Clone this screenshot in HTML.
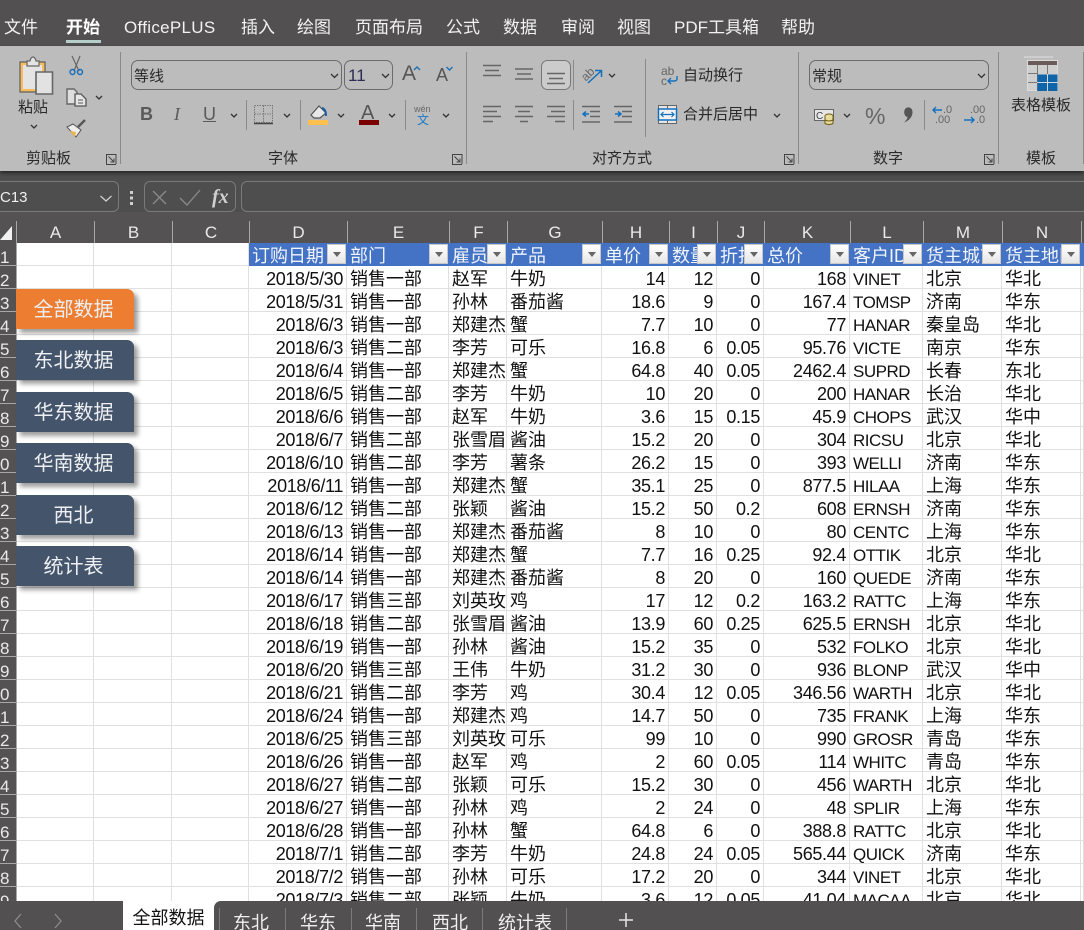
<!DOCTYPE html>
<html lang="zh-CN"><head><meta charset="utf-8"><title>Excel</title>
<style>
html,body{margin:0;padding:0;width:1084px;height:930px;overflow:hidden;background:#fff}
body{position:relative;font-family:"Liberation Sans","Noto Sans CJK SC",sans-serif;color:#111}
.a{position:absolute;white-space:nowrap}
#title{left:0;top:0;width:1084px;height:46px;background:#525051}
.m{top:16px;font-size:17px;line-height:24px;color:#f2f2f2}
#ribbon{left:0;top:46px;width:1084px;height:125px;background:#bcbcbc;box-shadow:0 2px 4px rgba(0,0,0,.55)}
#fbar{left:0;top:171px;width:1084px;height:50px;background:#4e4e4e}
#hdr{left:0;top:212px;width:1084px;height:31px;background:#545253}
.t{font-size:15px;line-height:20px;color:#2a2a2a}
.box{border:1px solid #6c6c6c;border-radius:7px;box-sizing:border-box}
.fb{border:1px solid #7a7a7a;border-radius:6px;box-sizing:border-box}
.ch{top:221px;height:22px;border-left:1px solid #a8a8a8;box-sizing:border-box;text-align:center;color:#eaeaea;font-size:17px;line-height:24px}
#rows{left:0;top:243px;width:16px;height:660px;background:#545253;overflow:hidden;border-right:1px solid #a8a8a8;box-sizing:content-box}
#rows div{height:22px;border-bottom:1px solid #a8a8a8;font-size:17px;line-height:30px;color:#eaeaea;text-align:right;padding-right:9px;white-space:nowrap;overflow:hidden}
#sheet{left:17px;top:243px;border-collapse:separate;border-spacing:0;table-layout:fixed;width:1067px}
#sheet td{box-sizing:border-box;height:23px;padding:5px 3px 0;line-height:17px;font-size:18px;border-right:1px solid #e0e0e0;border-bottom:1px solid #e0e0e0;white-space:nowrap;overflow:hidden;color:#111}
#sheet td:nth-child(4),#sheet td:nth-child(8),#sheet td:nth-child(9),#sheet td:nth-child(10),#sheet td:nth-child(11){text-align:right;letter-spacing:-.35px}
#sheet td:nth-child(12){font-size:17px;letter-spacing:-.5px;padding-left:3px}
#sheet tr.h td{background:#4472c4;color:#f0f4fb;border-right:0;border-bottom:1px solid #4472c4;position:relative;padding-top:4px;letter-spacing:0!important;text-align:left!important;font-size:18px}
#sheet tr.h td:nth-child(-n+3){background:#fff;border-right:1px solid #e0e0e0;border-bottom:1px solid #e0e0e0}
.f{position:absolute;right:1px;top:1px;width:19px;height:20px;box-sizing:border-box;background:linear-gradient(#fff,#e6e6e6);border:1px solid #c8c8c8}
.f:after{content:"";position:absolute;left:5px;top:7px;border:4px solid transparent;border-top:5px solid #666;border-bottom:0}
.btn{left:16px;width:115px;padding-right:3px;height:40px;border-radius:0 7px 0 0;background:#44546a;color:#eef0f3;font-size:20px;line-height:42px;text-align:center;box-shadow:4px 4px 5px rgba(0,0,0,.38)}
#tabs{left:0;top:901px;width:1084px;height:29px;background:#525051}
#act{left:123px;top:901px;width:91px;height:29px;background:#fff;text-align:center;font-size:18px;line-height:34px;color:#111}
.tb{top:909px;font-size:18px;line-height:28px;color:#f0f0f0}
.sp{top:908px;width:1px;height:22px;background:#7c7c7c}
</style></head><body>

<div class="a" id="title"></div>
<div class="a m" style="left:4px">文件</div>
<div class="a m" style="left:66px;font-weight:bold;color:#fff">开始</div>
<div class="a" style="left:66px;top:40px;width:35px;height:3px;background:#b7cfca"></div>
<div class="a m" style="left:124px;letter-spacing:.3px">OfficePLUS</div>
<div class="a m" style="left:241px">插入</div>
<div class="a m" style="left:297px">绘图</div>
<div class="a m" style="left:355px">页面布局</div>
<div class="a m" style="left:446px">公式</div>
<div class="a m" style="left:503px">数据</div>
<div class="a m" style="left:561px">审阅</div>
<div class="a m" style="left:617px">视图</div>
<div class="a m" style="left:674px">PDF工具箱</div>
<div class="a m" style="left:781px">帮助</div>

<div class="a" id="fbar"></div>
<div class="a" id="ribbon"></div>

<svg class="a" style="left:0;top:0;z-index:2" width="1084" height="215" viewBox="0 0 1084 215" fill="none">
<!-- separators -->
<g stroke="#8a8a8a" stroke-width="1">
<path d="M120.5 52V164M466.5 52V164M798.5 52V164M998.5 52V164M1083.5 52V164M246.5 100V130M300.5 100V130M405.5 100V130M573.5 60V90M573.5 100V130M645.5 59V137M924.5 100V130"/>
</g>
<!-- clipboard -->
<path d="M20 62H45V92H20Z" fill="#f7bd5c" stroke="#5f5f5f" stroke-width="1.2"/>
<path d="M23 65H42V89H23Z" fill="#e4e4e4"/>
<path d="M27 66V61H30Q31 57 33 57T36 61H39V66Z" fill="#e4e4e4" stroke="#666" stroke-width="1.2"/>
<path d="M36 72H52.5V94H36Z" fill="#e2e2e2" stroke="#666" stroke-width="1.6"/>
<!-- scissors -->
<path d="M72 56L79 71M80 56L74 71" stroke="#666" stroke-width="1.2"/>
<circle cx="72.5" cy="72" r="2.5" stroke="#1a6fb8" stroke-width="1.5"/><circle cx="80" cy="72" r="2.5" stroke="#1a6fb8" stroke-width="1.5"/>
<!-- copy -->
<path d="M67 89H74L77 92V104H67Z" fill="#dedede" stroke="#666" stroke-width="1.4"/>
<path d="M75 94H81L86 99V106H75Z" fill="#e6e6e6" stroke="#555" stroke-width="1.3"/>
<path d="M78 100H83M78 103H83" stroke="#555"/>
<!-- brush -->
<path d="M78 127L85 120" stroke="#555" stroke-width="2.4"/>
<path d="M73 124L81 130L76 137L67 127Z" fill="#eee" stroke="#555" stroke-width="1"/>
<path d="M70 131L76 132L75 137Z" fill="#f1b340"/>
<!-- chevrons -->
<g stroke="#333" stroke-width="1.3">
<path d="M31 125L34 128L37 125M96 96L99 99L102 96M231 114L234 117L237 114M284 114L287 117L290 114M338 114L341 117L344 114M389 114L392 117L395 114M443 114L446 117L449 114M609 74L612 77L615 74M774 114L777 117L780 114M844 114L847 117L850 114"/>
<path d="M331 74L334.5 77.5L338 74M382 74L385.5 77.5L389 74M978 74L981.5 77.5L985 74"/>
</g>
<!-- launchers -->
<g stroke="#444" stroke-width="1">
<path d="M116 164V154.5H106.5V164.5H116M108.5 156.5L114 162M114 158.5V162H110.5"/>
<path d="M462 164V154.5H452.5V164.5H462M454.5 156.5L460 162M460 158.5V162H456.5"/>
<path d="M794 164V154.5H784.5V164.5H794M786.5 156.5L792 162M792 158.5V162H788.5"/>
<path d="M994 164V154.5H984.5V164.5H994M986.5 156.5L992 162M992 158.5V162H988.5"/>
</g>
<!-- borders -->
<path d="M254.5 105.5H272.5V122.5H254.5ZM263.5 105.5V122.5M254.5 114H272.5" stroke="#777" stroke-dasharray="1.5 1"/>
<path d="M254 123.5H273" stroke="#444" stroke-width="1.6"/>
<!-- fill -->
<path d="M311 115L319 106L326 113L320 118H314Z" fill="#e8e8e8" stroke="#555" stroke-width="1.2"/>
<path d="M322 108Q326 109 326 116" stroke="#1a5fa8" stroke-width="2"/>
<rect x="308" y="120" width="20" height="5" fill="#fcc04e"/>
<!-- font color bar -->
<rect x="359" y="120" width="20" height="5" fill="#7a0000"/>
<!-- grow/shrink carets -->
<path d="M414 70L417 67L420 70" stroke="#1a6fb8" stroke-width="1.4"/>
<path d="M446.5 67L449.5 70L452.5 67" stroke="#1a6fb8" stroke-width="1.4"/>
<!-- aligns -->
<rect x="541.5" y="60.5" width="29" height="29" rx="6" fill="#cbcbcb" stroke="#777"/>
<g stroke="#666" stroke-width="1.5">
<path d="M483 65.5H501M485 70.5H499M483 75.5H501"/>
<path d="M515 69H533M517 74H531M515 79H533"/>
<path d="M547 73.5H565M549 78.5H563M547 83.5H565"/>
<path d="M483 106.5H501M483 111.5H497M483 116.5H501M483 121.5H493"/>
<path d="M515 106.5H533M518 111.5H530M515 116.5H533M520 121.5H528"/>
<path d="M547 106.5H565M551 111.5H565M547 116.5H565M555 121.5H565"/>
<path d="M582 106.5H600M590 111.5H600M590 116.5H600M582 122H600"/>
<path d="M614 106.5H632M622 111.5H632M622 116.5H632M614 122H632"/>
</g>
<path d="M583 114H589M586 111.5L583 114L586 116.5M615 114H621M618 111.5L621 114L618 116.5" stroke="#1370bd" stroke-width="1.5"/>
<!-- orientation -->
<path d="M588 83L601 71M595 70.5H601.5V77" stroke="#1370bd" stroke-width="1.5"/>
<text x="581" y="78" font-size="12" fill="#666" font-family="Liberation Sans" transform="rotate(-45 588 74)">ab</text>
<!-- wrap -->
<text x="661" y="75" font-size="12" fill="#666" font-family="Liberation Sans">ab</text>
<text x="661" y="85" font-size="12" fill="#666" font-family="Liberation Sans">c</text>
<path d="M677 76V79Q677 81 674 81H669M671 78L668 81L671 84" stroke="#1370bd" stroke-width="1.4"/>
<!-- merge -->
<rect x="658.5" y="105.5" width="18" height="18" fill="#e6e6e6" stroke="#666"/>
<rect x="658.5" y="109" width="18" height="11" fill="#f2f2f2" stroke="#1370bd" stroke-width="1.5"/>
<path d="M667.5 105V109M667.5 120V124" stroke="#666"/>
<path d="M661 114.5H674M663.5 112L661 114.5L663.5 117M671.5 112L674 114.5L671.5 117" stroke="#1370bd" stroke-width="1.2"/>
<!-- currency -->
<rect x="814.5" y="109.5" width="19" height="11" fill="#e6e6e6" stroke="#666"/>
<text x="816" y="119" font-size="10" fill="#444" font-family="Liberation Sans">C</text>
<ellipse cx="829" cy="116" rx="4" ry="2" fill="#e9dc9d" stroke="#6b5a10"/>
<path d="M825 116V123.5Q829 125.5 833 123.5V116M825 120Q829 122 833 120" fill="#e9dc9d" stroke="#6b5a10"/>
<!-- comma -->
<path d="M906 108C910 106 913 109 912.5 113C912 118 908 121 904 122.500C906.500 120 907.500 118.500 907.500 117C904 116.500 903 110.500 906 108Z" fill="#555"/>
<!-- dec -->
<path d="M933 110H942M936 107L933 110L936 113" stroke="#1370bd" stroke-width="1.4"/>
<path d="M964 120H974M971 117L974 120L971 123" stroke="#1370bd" stroke-width="1.4"/>
<!-- table template -->
<path d="M1024 57H1053" stroke="#d4d4d4" stroke-width="1.5"/>
<rect x="1027.5" y="60.5" width="30" height="30" fill="#cfcfcf" stroke="#dcdcdc"/>
<rect x="1028" y="61" width="29" height="4" fill="#6a5a5a"/>
<path d="M1037.5 65V91M1047.5 65V75M1028 73.5H1038M1028 82.500H1038" stroke="#777"/>
<rect x="1037.5" y="74.5" width="20" height="16.5" fill="#0f65a8"/>
<path d="M1047.5 74V91M1037 82.5H1058" stroke="#cfd8e0"/>
<!-- formula bar -->
<path d="M100.5 196L106 201L111.5 196" stroke="#cfcfcf" stroke-width="1.3"/>
<rect x="130" y="191" width="3" height="3" fill="#cfcfcf"/><rect x="130" y="196.5" width="3" height="3" fill="#cfcfcf"/><rect x="130" y="202" width="3" height="3" fill="#cfcfcf"/>
<path d="M153 191L166 204M166 191L153 204" stroke="#8a8a8a" stroke-width="1.3"/>
<path d="M180 198L187 205L200 190" stroke="#8a8a8a" stroke-width="1.3"/>
</svg>

<div class="a t" style="left:18px;top:98px;z-index:3">粘贴</div>
<div class="a t" style="left:26px;top:149px;z-index:3">剪贴板</div>
<div class="a t" style="left:268px;top:149px;z-index:3">字体</div>
<div class="a t" style="left:592px;top:149px;z-index:3">对齐方式</div>
<div class="a t" style="left:873px;top:149px;z-index:3">数字</div>
<div class="a t" style="left:1026px;top:149px;z-index:3">模板</div>
<div class="a box" style="left:131px;top:60px;width:211px;height:30px;z-index:1"></div>
<div class="a t" style="left:134px;top:67px;z-index:3">等线</div>
<div class="a box" style="left:344px;top:60px;width:49px;height:30px;z-index:1"></div>
<div class="a t" style="left:348px;top:66px;z-index:3;font-size:17px;color:#2b2b55">11</div>
<div class="a" style="left:140px;top:103px;z-index:3;font-size:18px;line-height:22px;font-weight:bold;color:#5a5a5a">B</div>
<div class="a" style="left:174px;top:103px;z-index:3;font-size:18px;line-height:22px;font-style:italic;font-family:'Liberation Serif',serif;color:#5a5a5a">I</div>
<div class="a" style="left:203px;top:103px;z-index:3;font-size:18px;line-height:22px;text-decoration:underline;color:#5a5a5a">U</div>
<div class="a" style="left:361px;top:103px;z-index:3;font-size:20px;line-height:20px;color:#555">A</div>
<div class="a" style="left:402px;top:62px;z-index:3;font-size:21px;line-height:24px;color:#555">A</div>
<div class="a" style="left:436px;top:64px;z-index:3;font-size:18px;line-height:22px;color:#555">A</div>
<div class="a" style="left:414px;top:104px;z-index:3;font-size:9px;line-height:10px;color:#666">wén</div>
<div class="a" style="left:417px;top:114px;z-index:3;font-size:12px;line-height:13px;color:#1a78c8">文</div>
<div class="a t" style="left:683px;top:66px;z-index:3">自动换行</div>
<div class="a t" style="left:683px;top:105px;z-index:3">合并后居中</div>
<div class="a box" style="left:809px;top:60px;width:180px;height:30px;z-index:1"></div>
<div class="a t" style="left:812px;top:67px;z-index:3">常规</div>
<div class="a" style="left:865px;top:103px;z-index:3;font-size:23px;line-height:26px;color:#666">%</div>
<div class="a" style="left:943px;top:105px;z-index:3;font-size:11px;line-height:10px;color:#666">.0</div>
<div class="a" style="left:935px;top:115px;z-index:3;font-size:11px;line-height:10px;color:#666">.00</div>
<div class="a" style="left:970px;top:105px;z-index:3;font-size:11px;line-height:10px;color:#666">.00</div>
<div class="a" style="left:976px;top:115px;z-index:3;font-size:11px;line-height:10px;color:#666">.0</div>
<div class="a t" style="left:1011px;top:96px;z-index:3">表格模板</div>

<div class="a fb" style="left:-8px;top:181px;width:127px;height:31px"></div>
<div class="a" style="left:0;top:188px;font-size:15px;line-height:20px;color:#f0f0f0;z-index:3">C13</div>
<div class="a fb" style="left:144px;top:181px;width:92px;height:31px"></div>
<div class="a" style="left:212px;top:184px;font-size:20px;line-height:26px;font-family:'Liberation Serif',serif;font-style:italic;font-weight:bold;color:#d0d0d0;z-index:3">fx</div>
<div class="a fb" style="left:241px;top:181px;width:860px;height:31px"></div>

<div class="a" id="hdr"></div>
<svg class="a" style="left:0;top:222px" width="16" height="21"><path d="M0 18H12V4Z" fill="#f2f2f2"/></svg>
<div class="a ch" style="left:16px;width:78px">A</div>
<div class="a ch" style="left:94px;width:78px">B</div>
<div class="a ch" style="left:172px;width:77px">C</div>
<div class="a ch" style="left:249px;width:98px">D</div>
<div class="a ch" style="left:347px;width:102px">E</div>
<div class="a ch" style="left:449px;width:58px">F</div>
<div class="a ch" style="left:507px;width:95px">G</div>
<div class="a ch" style="left:602px;width:67px">H</div>
<div class="a ch" style="left:669px;width:48px">I</div>
<div class="a ch" style="left:717px;width:47px">J</div>
<div class="a ch" style="left:764px;width:86px">K</div>
<div class="a ch" style="left:850px;width:73px">L</div>
<div class="a ch" style="left:923px;width:79px">M</div>
<div class="a ch" style="left:1002px;width:79px">N</div>
<div class="a ch" style="left:1081px;width:3px"></div>

<div class="a" id="rows">
<div>1</div><div>2</div><div>3</div><div>4</div><div>5</div><div>6</div><div>7</div><div>8</div><div>9</div><div>0</div><div>1</div><div>2</div><div>3</div><div>4</div><div>5</div><div>6</div><div>7</div><div>8</div><div>9</div><div>0</div><div>1</div><div>2</div><div>3</div><div>4</div><div>5</div><div>6</div><div>7</div><div>8</div><div>9</div>
</div>

<table class="a" id="sheet">
<colgroup><col style="width:77px"><col style="width:78px"><col style="width:77px"><col style="width:98px"><col style="width:102px"><col style="width:58px"><col style="width:95px"><col style="width:67px"><col style="width:48px"><col style="width:47px"><col style="width:86px"><col style="width:73px"><col style="width:79px"><col style="width:79px"><col style="width:3px"></colgroup>
<tr class="h"><td></td><td></td><td></td><td>订购日期<i class="f"></i></td><td>部门<i class="f"></i></td><td>雇员<i class="f"></i></td><td>产品<i class="f"></i></td><td>单价<i class="f"></i></td><td>数量<i class="f"></i></td><td>折扣<i class="f"></i></td><td>总价<i class="f"></i></td><td>客户ID<i class="f"></i></td><td>货主城市<i class="f"></i></td><td>货主地区<i class="f"></i></td><td></td></tr>
<tr><td></td><td></td><td></td><td>2018/5/30</td><td>销售一部</td><td>赵军</td><td>牛奶</td><td>14</td><td>12</td><td>0</td><td>168</td><td>VINET</td><td>北京</td><td>华北</td><td></td></tr>
<tr><td></td><td></td><td></td><td>2018/5/31</td><td>销售一部</td><td>孙林</td><td>番茄酱</td><td>18.6</td><td>9</td><td>0</td><td>167.4</td><td>TOMSP</td><td>济南</td><td>华东</td><td></td></tr>
<tr><td></td><td></td><td></td><td>2018/6/3</td><td>销售一部</td><td>郑建杰</td><td>蟹</td><td>7.7</td><td>10</td><td>0</td><td>77</td><td>HANAR</td><td>秦皇岛</td><td>华北</td><td></td></tr>
<tr><td></td><td></td><td></td><td>2018/6/3</td><td>销售二部</td><td>李芳</td><td>可乐</td><td>16.8</td><td>6</td><td>0.05</td><td>95.76</td><td>VICTE</td><td>南京</td><td>华东</td><td></td></tr>
<tr><td></td><td></td><td></td><td>2018/6/4</td><td>销售一部</td><td>郑建杰</td><td>蟹</td><td>64.8</td><td>40</td><td>0.05</td><td>2462.4</td><td>SUPRD</td><td>长春</td><td>东北</td><td></td></tr>
<tr><td></td><td></td><td></td><td>2018/6/5</td><td>销售二部</td><td>李芳</td><td>牛奶</td><td>10</td><td>20</td><td>0</td><td>200</td><td>HANAR</td><td>长治</td><td>华北</td><td></td></tr>
<tr><td></td><td></td><td></td><td>2018/6/6</td><td>销售一部</td><td>赵军</td><td>牛奶</td><td>3.6</td><td>15</td><td>0.15</td><td>45.9</td><td>CHOPS</td><td>武汉</td><td>华中</td><td></td></tr>
<tr><td></td><td></td><td></td><td>2018/6/7</td><td>销售二部</td><td>张雪眉</td><td>酱油</td><td>15.2</td><td>20</td><td>0</td><td>304</td><td>RICSU</td><td>北京</td><td>华北</td><td></td></tr>
<tr><td></td><td></td><td></td><td>2018/6/10</td><td>销售二部</td><td>李芳</td><td>薯条</td><td>26.2</td><td>15</td><td>0</td><td>393</td><td>WELLI</td><td>济南</td><td>华东</td><td></td></tr>
<tr><td></td><td></td><td></td><td>2018/6/11</td><td>销售一部</td><td>郑建杰</td><td>蟹</td><td>35.1</td><td>25</td><td>0</td><td>877.5</td><td>HILAA</td><td>上海</td><td>华东</td><td></td></tr>
<tr><td></td><td></td><td></td><td>2018/6/12</td><td>销售二部</td><td>张颖</td><td>酱油</td><td>15.2</td><td>50</td><td>0.2</td><td>608</td><td>ERNSH</td><td>济南</td><td>华东</td><td></td></tr>
<tr><td></td><td></td><td></td><td>2018/6/13</td><td>销售一部</td><td>郑建杰</td><td>番茄酱</td><td>8</td><td>10</td><td>0</td><td>80</td><td>CENTC</td><td>上海</td><td>华东</td><td></td></tr>
<tr><td></td><td></td><td></td><td>2018/6/14</td><td>销售一部</td><td>郑建杰</td><td>蟹</td><td>7.7</td><td>16</td><td>0.25</td><td>92.4</td><td>OTTIK</td><td>北京</td><td>华北</td><td></td></tr>
<tr><td></td><td></td><td></td><td>2018/6/14</td><td>销售一部</td><td>郑建杰</td><td>番茄酱</td><td>8</td><td>20</td><td>0</td><td>160</td><td>QUEDE</td><td>济南</td><td>华东</td><td></td></tr>
<tr><td></td><td></td><td></td><td>2018/6/17</td><td>销售三部</td><td>刘英玫</td><td>鸡</td><td>17</td><td>12</td><td>0.2</td><td>163.2</td><td>RATTC</td><td>上海</td><td>华东</td><td></td></tr>
<tr><td></td><td></td><td></td><td>2018/6/18</td><td>销售二部</td><td>张雪眉</td><td>酱油</td><td>13.9</td><td>60</td><td>0.25</td><td>625.5</td><td>ERNSH</td><td>北京</td><td>华北</td><td></td></tr>
<tr><td></td><td></td><td></td><td>2018/6/19</td><td>销售一部</td><td>孙林</td><td>酱油</td><td>15.2</td><td>35</td><td>0</td><td>532</td><td>FOLKO</td><td>北京</td><td>华北</td><td></td></tr>
<tr><td></td><td></td><td></td><td>2018/6/20</td><td>销售三部</td><td>王伟</td><td>牛奶</td><td>31.2</td><td>30</td><td>0</td><td>936</td><td>BLONP</td><td>武汉</td><td>华中</td><td></td></tr>
<tr><td></td><td></td><td></td><td>2018/6/21</td><td>销售二部</td><td>李芳</td><td>鸡</td><td>30.4</td><td>12</td><td>0.05</td><td>346.56</td><td>WARTH</td><td>北京</td><td>华北</td><td></td></tr>
<tr><td></td><td></td><td></td><td>2018/6/24</td><td>销售一部</td><td>郑建杰</td><td>鸡</td><td>14.7</td><td>50</td><td>0</td><td>735</td><td>FRANK</td><td>上海</td><td>华东</td><td></td></tr>
<tr><td></td><td></td><td></td><td>2018/6/25</td><td>销售三部</td><td>刘英玫</td><td>可乐</td><td>99</td><td>10</td><td>0</td><td>990</td><td>GROSR</td><td>青岛</td><td>华东</td><td></td></tr>
<tr><td></td><td></td><td></td><td>2018/6/26</td><td>销售一部</td><td>赵军</td><td>鸡</td><td>2</td><td>60</td><td>0.05</td><td>114</td><td>WHITC</td><td>青岛</td><td>华东</td><td></td></tr>
<tr><td></td><td></td><td></td><td>2018/6/27</td><td>销售二部</td><td>张颖</td><td>可乐</td><td>15.2</td><td>30</td><td>0</td><td>456</td><td>WARTH</td><td>北京</td><td>华北</td><td></td></tr>
<tr><td></td><td></td><td></td><td>2018/6/27</td><td>销售一部</td><td>孙林</td><td>鸡</td><td>2</td><td>24</td><td>0</td><td>48</td><td>SPLIR</td><td>上海</td><td>华东</td><td></td></tr>
<tr><td></td><td></td><td></td><td>2018/6/28</td><td>销售一部</td><td>孙林</td><td>蟹</td><td>64.8</td><td>6</td><td>0</td><td>388.8</td><td>RATTC</td><td>北京</td><td>华北</td><td></td></tr>
<tr><td></td><td></td><td></td><td>2018/7/1</td><td>销售二部</td><td>李芳</td><td>牛奶</td><td>24.8</td><td>24</td><td>0.05</td><td>565.44</td><td>QUICK</td><td>济南</td><td>华东</td><td></td></tr>
<tr><td></td><td></td><td></td><td>2018/7/2</td><td>销售一部</td><td>孙林</td><td>可乐</td><td>17.2</td><td>20</td><td>0</td><td>344</td><td>VINET</td><td>北京</td><td>华北</td><td></td></tr>
<tr><td></td><td></td><td></td><td>2018/7/3</td><td>销售二部</td><td>张颖</td><td>牛奶</td><td>3.6</td><td>12</td><td>0.05</td><td>41.04</td><td>MACAA</td><td>北京</td><td>华北</td><td></td></tr>
</table>

<div class="a btn" style="top:289px;background:#ed7d31">全部数据</div>
<div class="a btn" style="top:340px">东北数据</div>
<div class="a btn" style="top:392px">华东数据</div>
<div class="a btn" style="top:443px">华南数据</div>
<div class="a btn" style="top:495px">西北</div>
<div class="a btn" style="top:546px">统计表</div>

<div class="a" id="tabs" style="overflow:hidden"></div>
<div class="a" style="left:0;top:901px;width:123px;height:29px;background:#525051;border-radius:0 7px 0 0"></div>
<div class="a" id="act">全部数据</div>
<svg class="a" style="left:0;top:901px" width="130" height="29" fill="none"><path d="M21 13L15 20L21 27M55 13L61 20L55 27" stroke="#8c8c8c" stroke-width="1.3"/></svg>
<div class="a" style="left:214px;top:901px;width:7px;height:7px;background:#fff"></div>
<div class="a" style="left:214px;top:901px;width:7px;height:7px;background:#525051;border-radius:7px 0 0 0"></div>
<div class="a sp" style="left:219px"></div><div class="a sp" style="left:285px"></div><div class="a sp" style="left:351px"></div><div class="a sp" style="left:416px"></div><div class="a sp" style="left:482px"></div><div class="a sp" style="left:566px"></div>
<div class="a tb" style="left:233px">东北</div>
<div class="a tb" style="left:300px">华东</div>
<div class="a tb" style="left:365px">华南</div>
<div class="a tb" style="left:432px">西北</div>
<div class="a tb" style="left:498px">统计表</div>
<svg class="a" style="left:618px;top:912px" width="16" height="16"><path d="M8 1V15M1 8H15" stroke="#e8e8e8" stroke-width="1.5"/></svg>

</body></html>
